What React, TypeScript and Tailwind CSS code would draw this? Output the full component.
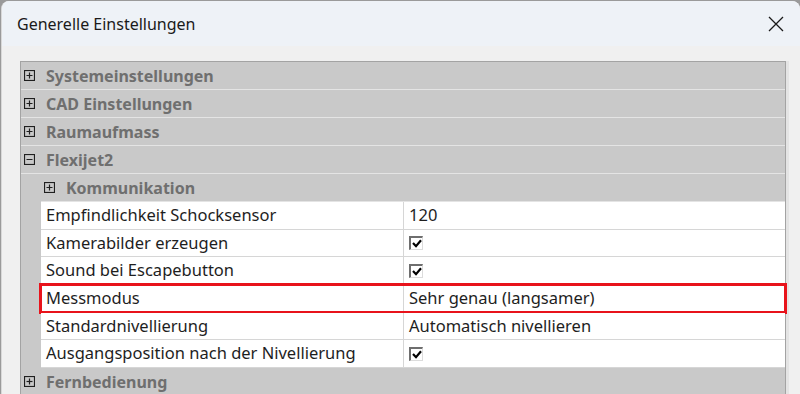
import React from "react";

const PlusBox = ({ minus = false }: { minus?: boolean }) => (
  <svg width="11" height="11" viewBox="0 0 11 11" className="shrink-0">
    <rect x="0.5" y="0.5" width="10" height="10" fill="none" stroke="#1f1f1f" strokeWidth="1.2" />
    <line x1="2.5" y1="5.5" x2="8.5" y2="5.5" stroke="#1f1f1f" strokeWidth="1.2" />
    {!minus && <line x1="5.5" y1="2.5" x2="5.5" y2="8.5" stroke="#1f1f1f" strokeWidth="1.2" />}
  </svg>
);

const Check = () => (
  <div className="w-[14px] h-[14px] border-t-2 border-l-2 border-t-[#6e6e6e] border-l-[#6e6e6e] border-r border-b border-r-[#dcdcdc] border-b-[#dcdcdc] bg-white flex items-center justify-center">
    <svg width="10" height="9" viewBox="0 0 10 9">
      <path d="M1 4 L4 7.2 L9 1.2" fill="none" stroke="#000" strokeWidth="2.2" />
    </svg>
  </div>
);

const Category = ({ label, minus = false }: { label: string; minus?: boolean }) => (
  <div className="h-[28px] flex items-center border-b border-[#e4e4e4] bg-[#c9c9c9]">
    <div className="pl-[3px] flex">
      <PlusBox minus={minus} />
    </div>
    <span className="ml-[11px] font-bold text-[#6f6f6f] text-[16px]">{label}</span>
  </div>
);

const DataRow = ({
  name,
  value,
  highlight = false,
}: {
  name: string;
  value: React.ReactNode;
  highlight?: boolean;
}) => (
  <div className="relative h-[27.7px] flex ml-[20px] border-b border-[#d6d6d6] bg-white">
    <div className="w-[363px] border-r border-[#d6d6d6] flex items-center pl-[5px] text-[16.5px] text-[#1e1e1e]">
      {name}
    </div>
    <div className="flex-1 flex items-center pl-[5px] text-[16.5px] text-[#1e1e1e]">{value}</div>
    {highlight && (
      <div className="absolute -top-[2px] -bottom-[2px] -left-[2px] -right-[2px] border-[3px] border-[#e8131b]" />
    )}
  </div>
);

export default function App() {
  return (
    <div
      className="w-[800px] h-[394px] overflow-hidden bg-[#9a9a9a]"
      style={{ fontFamily: '"Noto Sans", "Open Sans", sans-serif' }}
    >
      <div className="ml-[1px] mt-[1px] w-[799px] h-[393px] rounded-tl-[8px] rounded-tr-[8px] overflow-hidden bg-[#f0f0f0] border-l border-[#d8d8d8] flex flex-col">
        <div className="h-[45px] shrink-0 bg-[#eef2f7] flex items-center justify-between pl-[15px] pr-[16px]">
          <span className="text-[16px] text-[#1a1a1a] pt-[1px]">Generelle Einstellungen</span>
          <svg width="16" height="16" viewBox="0 0 16 16">
            <path d="M1 1 L15 15 M15 1 L1 15" stroke="#1a1a1a" strokeWidth="1.3" />
          </svg>
        </div>
        <div className="flex-1 flex pt-[15px] pl-[18px]">
          <div className="w-[766px] border border-[#a3a3a3] border-b-0 bg-[#c9c9c9] flex flex-col">
            <Category label="Systemeinstellungen" />
            <Category label="CAD Einstellungen" />
            <Category label="Raumaufmass" />
            <Category label="Flexijet2" minus />
            <div className="h-[28px] flex items-center ml-[20px] border-b border-[#e4e4e4] bg-[#c9c9c9]">
              <div className="pl-[3px] flex">
                <PlusBox />
              </div>
              <span className="ml-[11px] font-bold text-[#6f6f6f] text-[16px]">Kommunikation</span>
            </div>
            <DataRow name="Empfindlichkeit Schocksensor" value="120" />
            <DataRow name="Kamerabilder erzeugen" value={<Check />} />
            <DataRow name="Sound bei Escapebutton" value={<Check />} />
            <DataRow name="Messmodus" value="Sehr genau (langsamer)" highlight />
            <DataRow name="Standardnivellierung" value="Automatisch nivellieren" />
            <DataRow name="Ausgangsposition nach der Nivellierung" value={<Check />} />
            <Category label="Fernbedienung" />
          </div>
          <div className="w-[3px] bg-[#e4e4e4]" />
        </div>
      </div>
    </div>
  );
}
